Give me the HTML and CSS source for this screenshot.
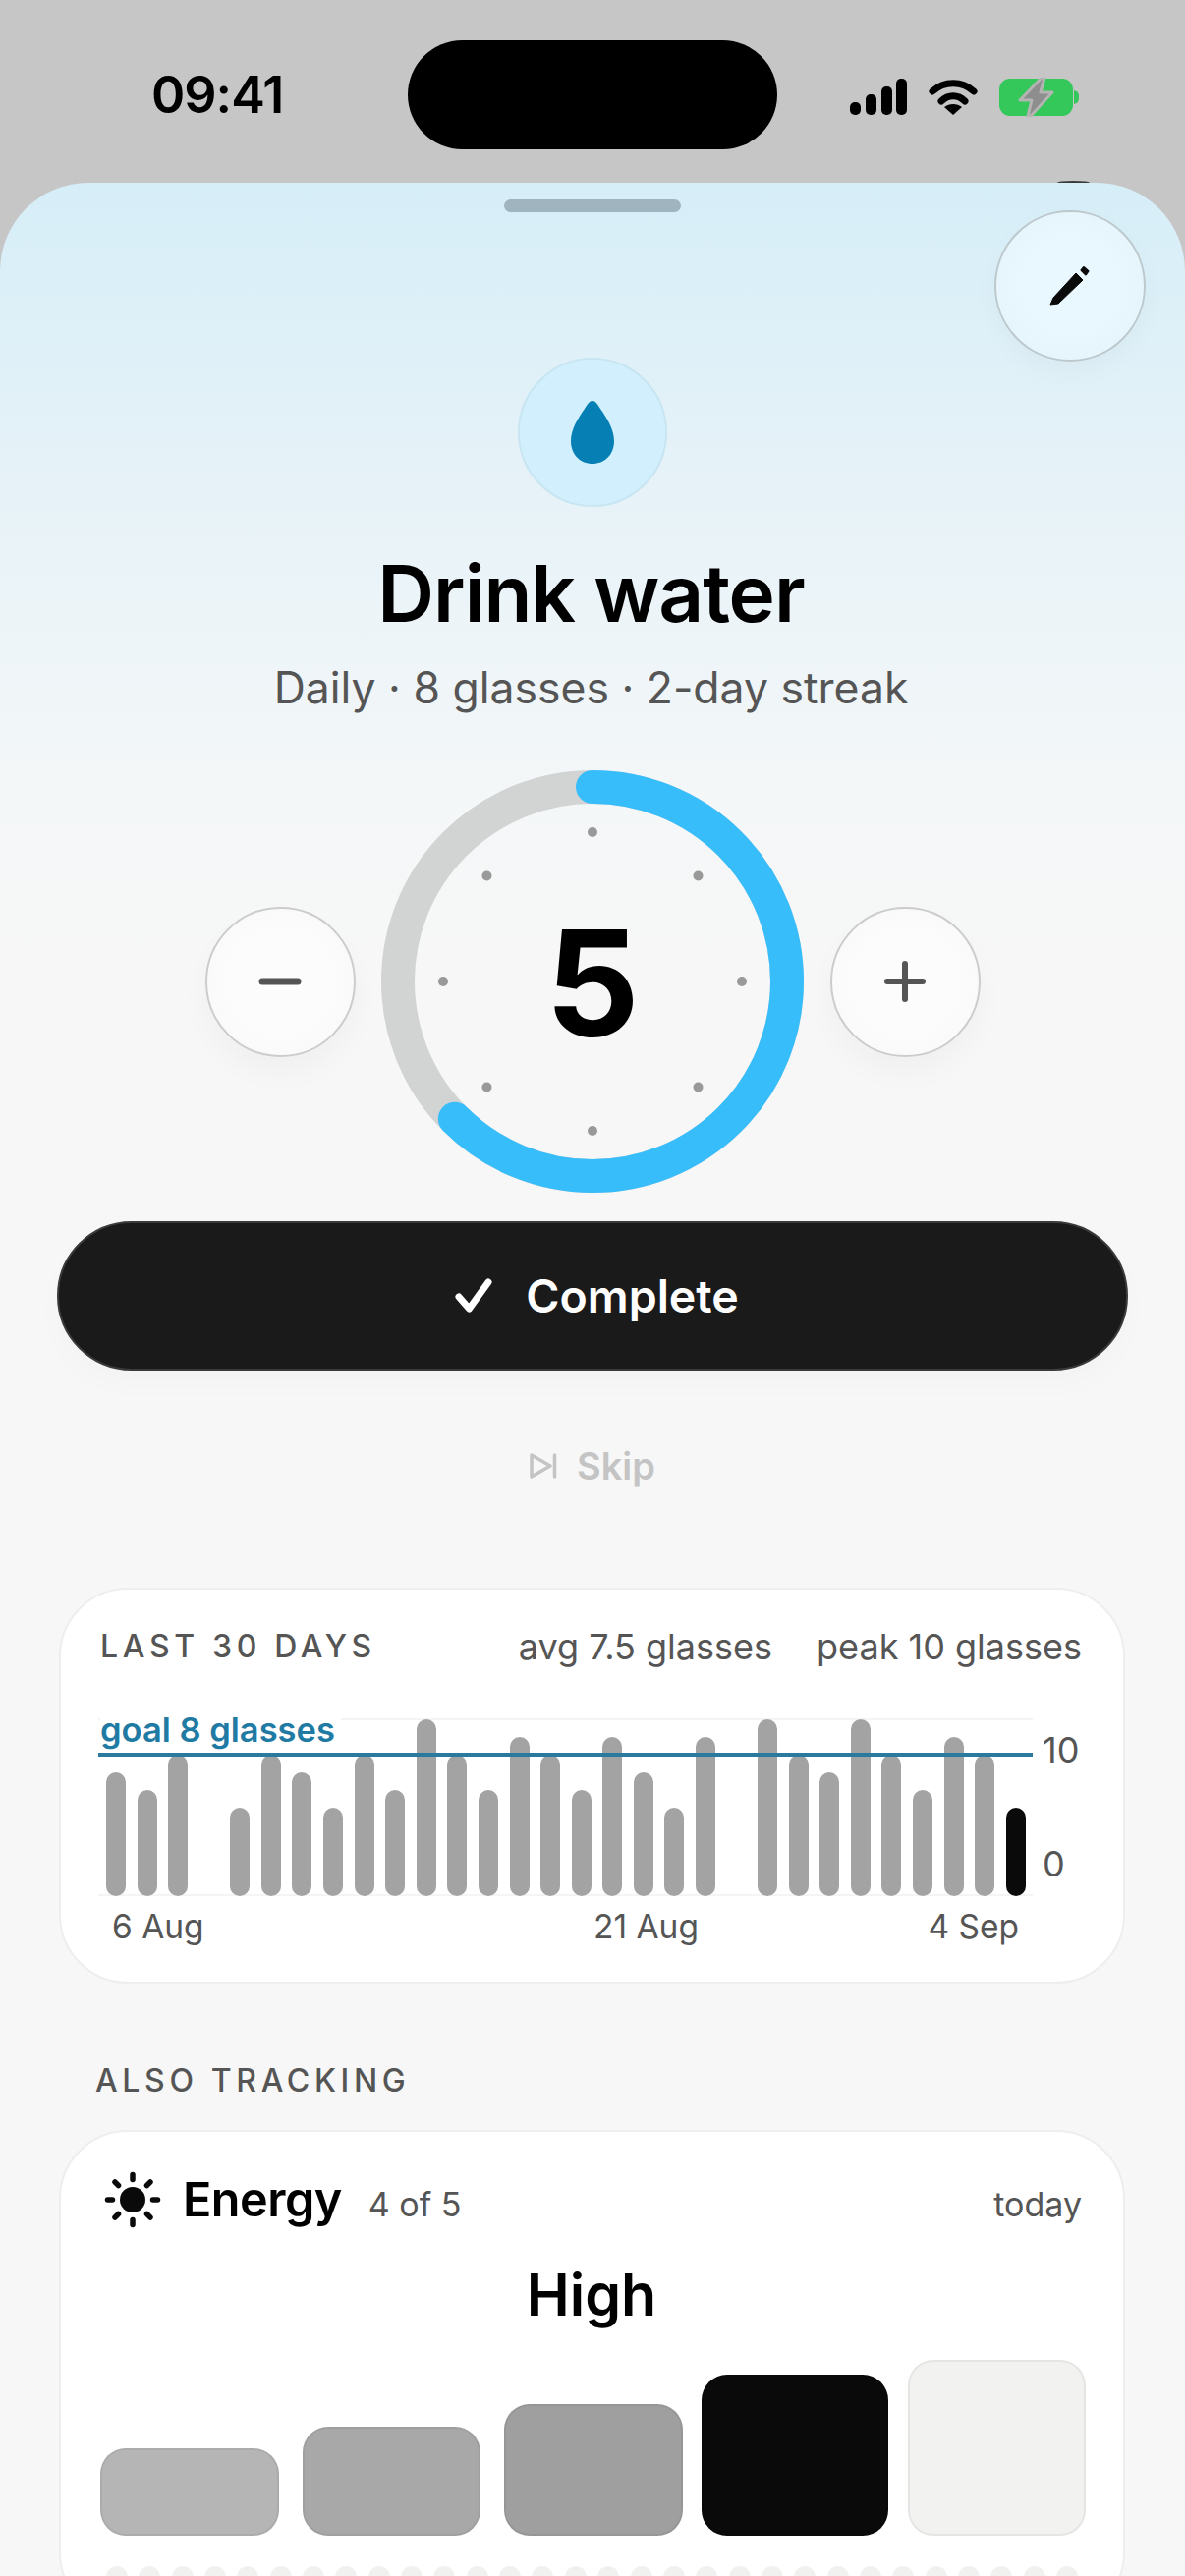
FILE: index.html
```html
<!DOCTYPE html>
<html>
<head>
  <title>Drink water</title>
  <link rel="stylesheet" href="styles.css">
</head>
<body>
  <header class="status">
    <span class="time">09:41</span>
    <div class="island"></div>
    <div class="status-icons">
      <svg width="58" height="38" viewBox="0 0 58 38"><g fill="#000"><rect x="0" y="24" width="11" height="13" rx="5"/><rect x="16" y="16" width="11" height="21" rx="5"/><rect x="32" y="8" width="11" height="29" rx="5"/><rect x="47" y="0" width="11" height="37" rx="5"/></g></svg>
      <svg width="50" height="38" viewBox="0 0 50 38"><g fill="none" stroke="#000" stroke-width="7" stroke-linecap="round"><path d="M4 13C16 2 34 2 46 13"/><path d="M13 23C20 16 30 16 37 23"/></g><path d="M25 37L16 29C21 25 29 25 34 29Z" fill="#000"/></svg>
      <svg width="82" height="40" viewBox="0 0 82 40"><rect x="0" y="1" width="75" height="38" rx="11" fill="#34c759"/><path d="M76 13C80 14 81 16 81 20C81 24 80 26 76 27Z" fill="#34c759"/><path d="M43 0L21 23H33L29 39H32L54 15H42L46 0Z" fill="#8e8e8e" stroke="#b4b4b4" stroke-width="3" stroke-linejoin="round"/></svg>
    </div>
  </header>

  <main class="sheet">
    <div class="handle"></div>
    <button class="edit-btn">
      <svg width="44" height="44" viewBox="0 0 44 44"><path d="M2 41L5 34L28 9L35 16L10 40Z" fill="#0a0a0a" stroke="#0a0a0a" stroke-linejoin="round"/><path d="M36 3L40.500 7L38 10.500L33.500 6Z" fill="#0a0a0a" stroke="#0a0a0a" stroke-width="2" stroke-linejoin="round"/></svg>
    </button>

    <section class="habit">
      <div class="habit-icon">
        <svg width="46" height="66" viewBox="0 0 46 66"><path d="M23 1C20 1 18 4 15 9C8 19 1 30 1 42C1 56 11 65 23 65C35 65 45 56 45 42C45 30 38 19 31 9C28 4 26 1 23 1Z" fill="#067fb5"/></svg>
      </div>
      <h1 class="habit-title">Drink water</h1>
      <p class="habit-sub">Daily · 8 glasses · 2-day streak</p>

      <div class="counter">
        <button class="round-btn">
          <svg width="44" height="44" viewBox="0 0 44 44"><path d="M4 22H40" stroke="#555" stroke-width="7" stroke-linecap="round"/></svg>
        </button>
        <div class="ring">
          <svg class="ring-svg" width="430" height="430" viewBox="0 0 430 430">
            <circle cx="215" cy="215" r="198" fill="none" stroke="#d2d4d4" stroke-width="34"/>
            <circle cx="215" cy="215" r="198" fill="none" stroke="#38bdfb" stroke-width="34" stroke-linecap="round" stroke-dasharray="777.5 1244.1" transform="rotate(-90 215 215)"/>
            <g fill="#999">
              <circle cx="215" cy="63" r="5"/>
              <circle cx="322.5" cy="107.5" r="5"/>
              <circle cx="367" cy="215" r="5"/>
              <circle cx="322.5" cy="322.5" r="5"/>
              <circle cx="215" cy="367" r="5"/>
              <circle cx="107.5" cy="322.5" r="5"/>
              <circle cx="63" cy="215" r="5"/>
              <circle cx="107.5" cy="107.5" r="5"/>
            </g>
          </svg>
          <span class="ring-count">5</span>
        </div>
        <button class="round-btn">
          <svg width="44" height="44" viewBox="0 0 44 44"><path d="M4 22H40M22 4V40" stroke="#555" stroke-width="6" stroke-linecap="round"/></svg>
        </button>
      </div>

      <button class="complete-btn">
        <svg width="40" height="38" viewBox="0 0 40 38"><path d="M5 20L15.500 32L35 5" fill="none" stroke="#fff" stroke-width="7" stroke-linecap="round" stroke-linejoin="round"/></svg>
        Complete
      </button>
      <button class="skip-btn">
        <svg width="28" height="26" viewBox="0 0 28 26"><path d="M2 2L21 13L2 24Z" fill="none" stroke="#c4c4c4" stroke-width="3.500" stroke-linejoin="round"/><path d="M25.500 2V24" stroke="#c4c4c4" stroke-width="3.500" stroke-linecap="round"/></svg>
        Skip
      </button>
    </section>

    <section class="card history">
      <div class="history-head">
        <span class="caps">LAST 30 DAYS</span>
        <div class="history-stats">
          <span>avg 7.5 glasses</span>
          <span>peak 10 glasses</span>
        </div>
      </div>
      <div class="chart">
        <div class="plot">
          <span class="goal-label">goal 8 glasses</span>
          <div class="goal-line"></div>
          <div class="bars">
            <i style="height:126px"></i><i style="height:108px"></i><i style="height:144px"></i><b></b>
            <i style="height:90px"></i><i style="height:144px"></i><i style="height:126px"></i><i style="height:90px"></i>
            <i style="height:144px"></i><i style="height:108px"></i><i style="height:180px"></i><i style="height:144px"></i>
            <i style="height:108px"></i><i style="height:162px"></i><i style="height:144px"></i><i style="height:108px"></i>
            <i style="height:162px"></i><i style="height:126px"></i><i style="height:90px"></i><i style="height:162px"></i><b></b>
            <i style="height:180px"></i><i style="height:144px"></i><i style="height:126px"></i><i style="height:180px"></i>
            <i style="height:144px"></i><i style="height:108px"></i><i style="height:162px"></i><i style="height:144px"></i>
            <i class="today" style="height:90px"></i>
          </div>
        </div>
        <div class="y-axis"><span>10</span><span>0</span></div>
      </div>
      <div class="x-axis"><span>6 Aug</span><span>21 Aug</span><span>4 Sep</span></div>
    </section>

    <h2 class="caps section-title">ALSO TRACKING</h2>

    <section class="card energy">
      <div class="energy-head">
        <svg width="58" height="58" viewBox="0 0 58 58">
          <circle cx="29" cy="29" r="13" fill="#0a0a0a"/>
          <path d="M29 3.500V8.500M29 49.500V54.500M3.500 29H8.500M49.500 29H54.500M11 11L14.500 14.500M47 11L43.500 14.500M11 47L14.500 43.500M47 47L43.500 43.500" stroke="#0a0a0a" stroke-width="5.500" stroke-linecap="round"/>
        </svg>
        <span class="energy-name">Energy</span>
        <span class="energy-score">4 of 5</span>
        <span class="energy-when">today</span>
      </div>
      <div class="energy-level">High</div>
      <div class="levels">
        <div class="level level-1"></div>
        <div class="level level-2"></div>
        <div class="level level-3"></div>
        <div class="level level-4"></div>
        <div class="level level-5"></div>
      </div>
      <div class="pills">
        <i></i><i></i><i></i><i></i><i></i><i></i><i></i><i></i><i></i><i></i>
        <i></i><i></i><i></i><i></i><i></i><i></i><i></i><i></i><i></i><i></i>
        <i></i><i></i><i></i><i></i><i></i><i></i><i></i><i></i><i></i><i></i>
      </div>
    </section>
  </main>
</body>
</html>
```

FILE: styles.css
```css
* {
  box-sizing: border-box;
}

html, body {
  margin: 0;
  height: 2622px;
  overflow: hidden;
}

body {
  width: 1206px;
  background: #c6c6c6;
  font-family: Inter, "Liberation Sans", sans-serif;
  color: #0a0a0a;
}

button {
  font-family: inherit;
  border: 0;
  padding: 0;
  background: none;
}

/* status bar */
.status {
  position: relative;
  height: 186px;
  padding: 41px 0 0 155px;
  display: flex;
  align-items: flex-start;
}

/* sliver of something dark peeking over the sheet */
.status::after {
  content: "";
  position: absolute;
  left: 1076px;
  bottom: 0;
  width: 33px;
  height: 2px;
  border-radius: 50% 50% 0 0 / 100% 100% 0 0;
  background: #3a3a3a;
}

.time {
  width: 260px;
  margin: 26px 0 0 -1px;
  font-size: 52px;
  line-height: 60px;
  font-weight: 600;
  letter-spacing: -1px;
  color: #000;
  flex: none;
}

.island {
  width: 376px;
  height: 111px;
  margin-left: 1px;
  border-radius: 56px;
  background: #000;
}

.status-icons {
  margin: 38px 0 0 74px;
  display: flex;
  align-items: center;
  gap: 22px;
}

/* sheet */
.sheet {
  position: relative;
  height: 2436px;
  border-radius: 90px 90px 0 0;
  background: linear-gradient(#d6eef8 0, #e6f2f8 300px, #f4f7f8 620px, #f7f7f7 800px);
  overflow: hidden;
}

.handle {
  width: 180px;
  height: 13px;
  margin: 17px auto 0;
  border-radius: 7px;
  background: #a0b4c0;
}

.edit-btn {
  position: absolute;
  top: 28px;
  left: 1012px;
  width: 154px;
  height: 154px;
  border-radius: 50%;
  border: 2px solid #bcc8cc;
  background: radial-gradient(#e9f8fe 45%, #e3f2f8 100%);
  box-shadow: 0 10px 26px rgba(0, 0, 0, 0.03);
  display: flex;
  align-items: center;
  justify-content: center;
}

.habit {
  display: flex;
  flex-direction: column;
  align-items: center;
}

.habit-icon {
  width: 152px;
  height: 152px;
  margin-top: 148px;
  border-radius: 50%;
  border: 2px solid #c8e6f2;
  background: #d2effd;
  display: flex;
  align-items: center;
  justify-content: center;
}

.habit-title {
  margin: 41px 3px 0 0;
  font-size: 80px;
  line-height: 94px;
  font-weight: 600;
  letter-spacing: -1px;
  color: #000;
}

.habit-sub {
  margin: 22px 3px 0 0;
  font-size: 44.500px;
  line-height: 54px;
  color: #555;
}

.counter {
  margin-top: 57px;
  display: flex;
  align-items: center;
  gap: 26.500px;
}

.round-btn {
  width: 153px;
  height: 153px;
  border-radius: 50%;
  border: 2px solid #cccccc;
  background: radial-gradient(#fcfcfc 50%, #f7f7f7 100%);
  box-shadow: 0 16px 30px rgba(0, 0, 0, 0.03);
  display: flex;
  align-items: center;
  justify-content: center;
}

.ring {
  position: relative;
  width: 430px;
  height: 430px;
}

.ring-svg {
  display: block;
}

.ring-count {
  position: absolute;
  inset: 2px 0 0;
  display: flex;
  align-items: center;
  justify-content: center;
  font-size: 150px;
  font-weight: 700;
  color: #000;
}

.complete-btn {
  width: 1090px;
  height: 152px;
  margin-top: 29px;
  padding-left: 8px;
  border-radius: 77px;
  border: 2px solid #3a3a3a;
  background: #1a1a1a;
  box-shadow: 0 14px 30px rgba(0, 0, 0, 0.02);
  color: #fff;
  font-size: 46.500px;
  font-weight: 600;
  display: flex;
  align-items: center;
  justify-content: center;
  gap: 33px;
}

.skip-btn {
  margin-top: 74px;
  color: #c4c4c4;
  font-size: 38px;
  line-height: 46px;
  font-weight: 600;
  display: flex;
  align-items: center;
  gap: 20px;
}

/* cards */
.card {
  width: 1085px;
  margin-left: 60px;
  border: 2px solid #eeeeee;
  border-radius: 70px;
  background: #fff;
}

.caps {
  font-size: 32px;
  font-weight: 500;
  letter-spacing: 4.650px;
  color: #555;
}

.history {
  height: 403px;
  margin-top: 101px;
  padding: 36px 42px 0 40px;
}

.history-head {
  display: flex;
  justify-content: space-between;
  align-items: center;
  line-height: 44px;
}

.history-stats {
  display: flex;
  gap: 45px;
  font-size: 36px;
  color: #555;
}

.chart {
  margin-top: 51px;
  display: flex;
}

.plot {
  position: relative;
  width: 952px;
  margin-left: -2px;
  height: 181px;
  border-top: 2px solid #f4f4f4;
  border-bottom: 2px solid #f4f4f4;
}

.goal-label {
  position: absolute;
  top: -10px;
  left: 2px;
  padding-right: 6px;
  background: #fff;
  z-index: 1;
  font-size: 34.500px;
  line-height: 40px;
  font-weight: 600;
  color: #1f7ba3;
}

.goal-line {
  position: absolute;
  top: 33px;
  left: 0;
  right: 0;
  height: 4px;
  background: #2a7a9e;
  z-index: 2;
}

.bars {
  position: absolute;
  left: 8px;
  top: -2px;
  bottom: -2px;
  width: 936px;
  display: flex;
  align-items: flex-end;
  justify-content: space-between;
}

.bars i,
.bars b {
  width: 20px;
  border-radius: 10px;
  background: #a3a3a3;
}

.bars b {
  background: none;
}

.bars .today {
  background: #0a0a0a;
}

.y-axis {
  width: 50px;
  padding-left: 10px;
  font-size: 36px;
  line-height: 40px;
  color: #555;
  display: flex;
  flex-direction: column;
  gap: 76px;
  margin-top: 12px;
}

.x-axis {
  display: flex;
  margin: 11px 64px 0 12px;
  font-size: 33.500px;
  line-height: 40px;
  color: #555;
}

.x-axis span:first-child {
  width: 490px;
}

.x-axis span:nth-child(2) {
  margin-right: auto;
}

.section-title {
  margin: 77px 0 0 97px;
  line-height: 44px;
}

.energy {
  height: 500px;
  margin-top: 28px;
  padding: 39px 42px 0 41px;
}

.energy-head {
  display: flex;
  align-items: baseline;
  height: 60px;
}

.energy-head svg {
  align-self: center;
  margin: 0 22px 0 3px;
}

.energy-name {
  font-size: 48.500px;
  font-weight: 600;
  letter-spacing: -0.5px;
  color: #000;
}

.energy-score {
  margin-left: 27px;
  font-size: 34px;
  color: #555;
}

.energy-when {
  margin-left: auto;
  font-size: 34px;
  color: #555;
}

.energy-level {
  margin-top: 33px;
  text-align: center;
  font-size: 59px;
  line-height: 68px;
  font-weight: 600;
  color: #000;
}

.levels {
  height: 179px;
  margin: 32px 0 0 -1px;
  display: flex;
  align-items: flex-end;
  gap: 24px;
}

.level {
  width: 181.500px;
  flex: none;
  border-radius: 26px;
  border: 2px solid rgba(0, 0, 0, 0.05);
}

.level-1 { height: 89px; background: #b5b5b5; }
.level-2 { height: 111px; background: #a8a8a8; }
.level-3 { height: 134px; background: #9f9f9f; }
.level-4 { height: 164px; width: 190px; margin: 0 -4px 0 -5px; background: #0a0a0a; }
.level-5 { height: 179px; background: #f2f2f1; }

.pills {
  margin: 31px 4px 0 5px;
  display: flex;
  justify-content: space-between;
}

.pills i {
  width: 22px;
  height: 40px;
  border-radius: 11px;
  background: #f1f1ef;
}
```
